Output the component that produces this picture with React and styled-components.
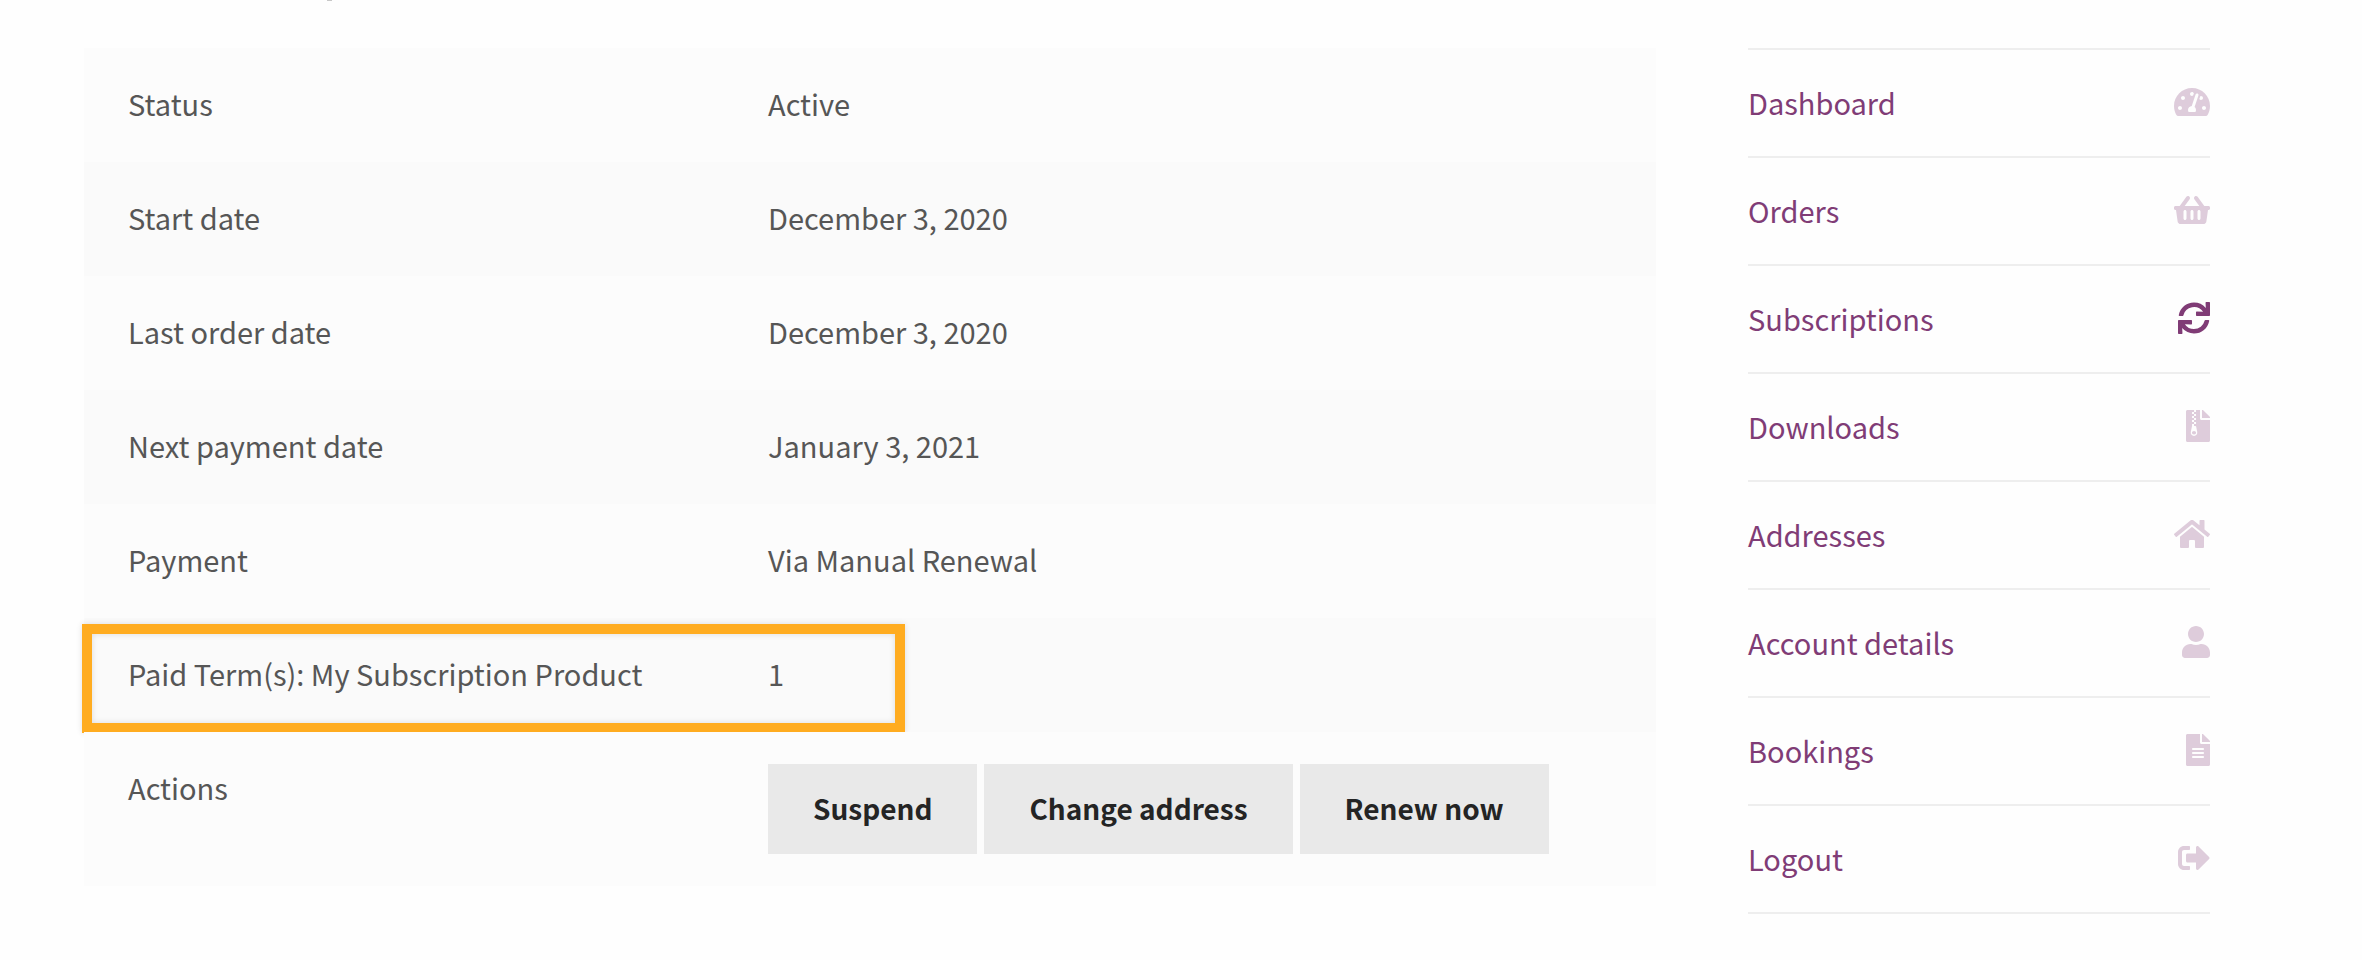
import React from 'react';
import styled, { createGlobalStyle } from 'styled-components';
import {
  FaTachometerAlt,
  FaShoppingBasket,
  FaSync,
  FaFileArchive,
  FaHome,
  FaUser,
  FaFileAlt,
  FaSignOutAlt,
} from 'react-icons/fa';

const GlobalStyle = createGlobalStyle`
  body {
    margin: 0;
    background-color: #fefefe;
    color: #565656;
    font-family: 'Noto Sans CJK SC', 'Noto Sans', sans-serif;
    font-size: 29px;
    line-height: 46px;
  }

  *, ::before, ::after {
    box-sizing: border-box;
  }
`;

const Page = styled.div`
  position: relative;
  display: grid;
  grid-template-columns: minmax(0, 1572fr) minmax(0, 462fr);
  column-gap: 92px;
  align-items: start;
  padding: 48px 152px 46px 84px;

  /* Last bit of the heading that is scrolled out above */
  &::before {
    content: '';
    position: absolute;
    top: 0;
    left: 327px;
    width: 5px;
    height: 1px;
    background-color: #c8c8c8;
  }
`;

const DetailsTable = styled.table`
  width: 100%;
  border-collapse: collapse;
  table-layout: fixed;
`;

const Row = styled.tr`
  position: relative;
  background-color: #fcfcfc;

  &:nth-child(even) {
    background-color: #fafafa;
  }
`;

const Label = styled.th`
  width: 684px;
  padding: 32px 0 36px 44px;
  font-weight: 400;
  text-align: left;
  vertical-align: top;
`;

const Value = styled.td`
  padding: 32px 44px ${({ $hasButtons }) => ($hasButtons ? '32px' : '36px')} 0;
  vertical-align: top;
`;

/* Orange frame around the paid terms */
const Highlight = styled.span`
  position: absolute;
  top: 6px;
  left: -2px;
  width: 823px;
  height: 109px;
  border: 10px solid #ffac20;
  box-shadow: 0 0 6px rgba(0, 0, 0, 0.12), inset 0 0 6px rgba(0, 0, 0, 0.12);
  pointer-events: none;
`;

const Actions = styled.div`
  display: flex;
  flex-wrap: wrap;
  gap: 7px;
`;

const ActionButton = styled.button`
  padding: 21px 45px 23px;
  border: none;
  background-color: #e9e9e9;
  color: #242424;
  font: inherit;
  font-size: 28px;
  font-weight: 700;
  cursor: pointer;

  &:hover {
    background-color: #d5d5d5;
  }
`;

const NavList = styled.ul`
  margin: 0;
  padding: 0;
  border-top: 2px solid #eeeeee;
  list-style: none;
`;

const NavItem = styled.li`
  border-bottom: 2px solid #eeeeee;
`;

const NavLink = styled.a`
  display: flex;
  align-items: center;
  justify-content: space-between;
  padding: 29px 0 31px;
  color: #803c76;
  text-decoration: none;
`;

const NavIcon = styled.span`
  display: flex;
  width: ${({ $width }) => $width}px;
  opacity: ${({ $active }) => ($active ? 1 : 0.25)};

  svg {
    width: 100%;
    height: 32px;
  }
`;

const details = [
  { label: 'Status', value: 'Active' },
  { label: 'Start date', value: 'December 3, 2020' },
  { label: 'Last order date', value: 'December 3, 2020' },
  { label: 'Next payment date', value: 'January 3, 2021' },
  { label: 'Payment', value: 'Via Manual Renewal' },
  { label: 'Paid Term(s): My Subscription Product', value: '1', highlighted: true },
];

const actions = ['Suspend', 'Change address', 'Renew now'];

const links = [
  { label: 'Dashboard', icon: FaTachometerAlt, width: 36 },
  { label: 'Orders', icon: FaShoppingBasket, width: 36 },
  { label: 'Subscriptions', icon: FaSync, width: 32, active: true },
  { label: 'Downloads', icon: FaFileArchive, width: 24 },
  { label: 'Addresses', icon: FaHome, width: 36 },
  { label: 'Account details', icon: FaUser, width: 28 },
  { label: 'Bookings', icon: FaFileAlt, width: 24 },
  { label: 'Logout', icon: FaSignOutAlt, width: 32 },
];

const App = () => {
  return (
    <>
      <GlobalStyle />
      <Page>
        <main>
          <DetailsTable>
            <tbody>
              {details.map(({ label, value, highlighted }) => (
                <Row key={label}>
                  <Label scope="row">
                    {label}
                    {highlighted && <Highlight />}
                  </Label>
                  <Value>{value}</Value>
                </Row>
              ))}
              <Row>
                <Label scope="row">Actions</Label>
                <Value $hasButtons>
                  <Actions>
                    {actions.map((action) => (
                      <ActionButton key={action} type="button">{action}</ActionButton>
                    ))}
                  </Actions>
                </Value>
              </Row>
            </tbody>
          </DetailsTable>
        </main>
        <nav>
          <NavList>
            {links.map(({ label, icon: Icon, width, active }) => (
              <NavItem key={label}>
                <NavLink href="#" aria-current={active ? 'page' : undefined}>
                  {label}
                  <NavIcon $width={width} $active={active}>
                    <Icon aria-hidden="true" />
                  </NavIcon>
                </NavLink>
              </NavItem>
            ))}
          </NavList>
        </nav>
      </Page>
    </>
  );
};

export default App;
